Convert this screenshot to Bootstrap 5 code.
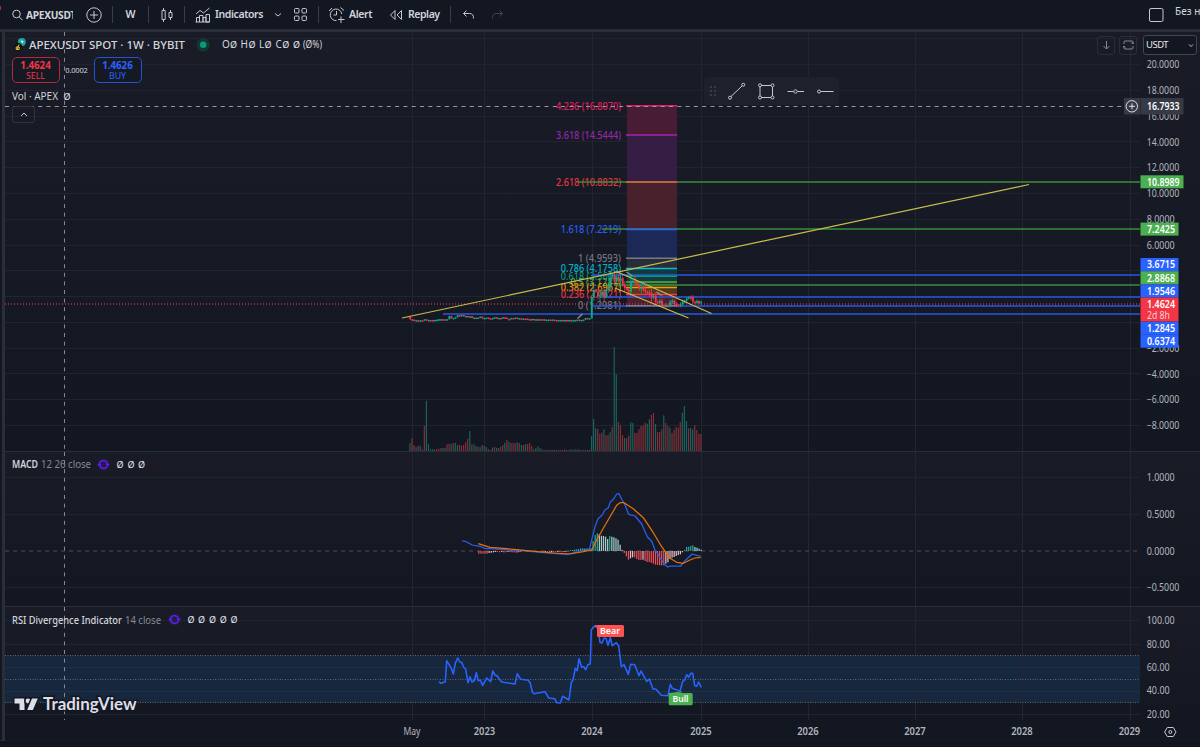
<!DOCTYPE html>
<html lang="en" data-bs-theme="dark">
<head>
  <meta charset="UTF-8" />
  <meta name="viewport" content="width=device-width, initial-scale=1" />
  <title>APEXUSDT</title>
  <link href="https://cdn.jsdelivr.net/npm/bootstrap@5.3.2/dist/css/bootstrap.min.css" rel="stylesheet" />
  <style>
    body { background: #131722; color: #d1d4dc; font-family: "Noto Sans", "Open Sans", sans-serif; font-size: 10.5px; line-height: 1; height: 747px; overflow: hidden; }
    svg { display: block; flex: none; }
    svg text { font-family: "Noto Sans", "Open Sans", sans-serif; font-size: 10px; }
    .topbar { height: 29px; background: #131722; font-weight: 600; font-size: 10.5px; }
    .topbar .slot { display: flex; align-items: center; flex: none; height: 29px; white-space: nowrap; }
    .topbar .sep { width: 1px; height: 17px; background: #3a3e4a; flex: none; }
    .topbar .ticker { width: 47px; font-weight: 700; font-size: 10.2px; letter-spacing: -.3px; margin-left: -1px; line-height: 14px; }
    .ico { fill: none; stroke: #c5c8d0; stroke-width: 1; }
    .workspace { border-top: 3px solid #2a2e39; height: 711px; }
    .strip { width: 5px; border-left: 2px solid #131722; background: #2a2e39; flex: none; }
    .pane { background: linear-gradient(#191c27, #131722); }
    .pane + .pane { border-top: 1px solid #2a2e39; }
    .legend { position: absolute; left: 7px; white-space: nowrap; }
    .quote { width: 48px; height: 26px; border: 1px solid; border-radius: 5px; font-size: 8.8px; text-align: center; padding-top: 2px; line-height: 11px; background: #151924; }
    .quote b { font-size: 9.8px; display: block; font-weight: 700; letter-spacing: -.05px; }
    .quote.sell { color: #f23645; border-color: #b22b3a; }
    .quote.buy { color: #2962ff; border-color: #2354d6; }
    .spread { width: 34px; font-size: 7.5px; letter-spacing: -.2px; padding-top: 2px; }
    .fold { width: 23px; height: 17px; border: 1px solid #2f333f; border-radius: 3px; }
    .tools { position: absolute; left: 699px; top: 45px; width: 135px; height: 28px; background: #1d212c; border-radius: 4px; }
    .sqbtn { width: 18px; height: 19px; border: 1px solid #2a2e39; border-radius: 3px; }
    .currency { width: 54px; height: 20px; border: 1px solid #434651; border-radius: 3px; background: #131722; color: #e4e6ec; font-size: 9.5px; letter-spacing: -.5px; }
    .corner { position: absolute; right: 3px; top: 3px; }
    .brand { position: absolute; left: 8px; top: 87px; }
    .timeaxis { height: 22px; background: #131722; }
    .bottomline { height: 7px; border-top: 1px solid #2a2e39; background: #11141e; }
    svg text.void { font-size: 9px; font-weight: 500; }
  </style>
</head>
<body>
  <header class="topbar d-flex align-items-center position-relative">
    <div class="slot ps-2" style="width:80px">
      <svg class="ico ms-1 me-1" width="11" height="12" viewBox="0 0 11 12"><circle cx="4.5" cy="5" r="3.8"/><path d="M7.2 7.8l3.3 3.4"/></svg>
      <span class="ticker overflow-hidden">APEXUSDT</span>
    </div>
    <div class="slot" style="width:32px">
      <svg class="ico" width="28" height="18" viewBox="80 6 28 18"><circle cx="94" cy="15" r="7.2"/><path d="M90 15h8M94 11v8"/></svg>
    </div>
    <div class="sep"></div>
    <div class="slot justify-content-center" style="width:35px">W</div>
    <div class="sep"></div>
    <div class="slot justify-content-center" style="width:35px">
      <svg class="ico" width="14" height="16" viewBox="0 0 14 16"><path d="M2 3.5h3.2v9H2zM3.5 1v2.5M3.5 12.5V15M9 5.5h3v5H9zM10.5 3v2.5M10.5 10.5V13"/></svg>
    </div>
    <div class="sep"></div>
    <div class="slot" style="width:133px">
      <svg class="ico" width="30" height="18" viewBox="185 6 30 18"><path d="M196.5 22v-4.5h3V22M199.5 22v-6.5h3.5V22M203 22v-4.5h3V22M206 22v-7.5h3.5V22zM195.5 22h14M196 14l4-3.5 3.5 2.5 6-5"/></svg>
      <span style="letter-spacing:-.4px;width:49px">Indicators</span>
      <svg class="ico" width="54" height="18" viewBox="264 6 54 18"><path d="M275 13.5l3 2.5 3-2.5"/><g><rect x="294.5" y="8.5" width="4.5" height="4.5" rx="1"/><rect x="302" y="8.5" width="4.5" height="4.5" rx="1"/><rect x="294.5" y="16" width="4.5" height="4.5" rx="1"/><rect x="302" y="16" width="4.5" height="4.5" rx="1"/></g></svg>
    </div>
    <div class="sep"></div>
    <div class="slot" style="width:131px">
      <svg class="ico" width="30" height="18" viewBox="319 6 30 18"><path d="M341.8 14a5.8 5.8 0 1 0-5.3 6.6M336.5 11v4h-3M329 11l3-3M340.5 7.5l3.5 3M341 16.5v6.5M338 19.5h6.5"/></svg>
      <span style="width:40px;letter-spacing:-.35px">Alert</span>
      <svg class="ico" width="19" height="18" viewBox="389 6 19 18"><path d="M395 10.5v9l-4.5-4.5zM401.5 10.5v9L397 15z"/></svg>
      <span style="letter-spacing:-.45px">Replay</span>
    </div>
    <div class="sep"></div>
    <div class="slot">
      <svg class="ico" width="56" height="18" viewBox="451 6 56 18"><path d="M466.5 10.5L463.5 13.5l3 3M463.5 13.5h6c3 0 4 2 4 5"/><path stroke="#434651" d="M499.5 10.5l3 3-3 3M502.5 13.5h-6c-3 0-4 2-4 5"/></svg>
    </div>
    <div class="slot ms-auto align-items-start" style="width:52px">
      <svg class="ico" width="27" height="24" viewBox="1148 0 27 24"><rect x="1149.5" y="8.5" width="13.5" height="13" rx="1.5"/></svg>
      <span class="fw-normal" style="font-size:10px;padding-top:6px">Без н</span>
    </div>
    <svg class="position-absolute start-0 top-0" width="3" height="14"><circle cx="-2" cy="8" r="3" fill="#c62f3d"/></svg>
  </header>

  <main class="workspace d-flex">
    <div class="strip"></div>
    <div class="d-flex flex-column">
      <section class="pane position-relative" style="height:419px">
        <svg id="price" width="1195" height="419" viewBox="5 32 1195 419"></svg>
        <div class="legend" style="top:6px">
          <svg width="320" height="15" viewBox="12 38 320 15" fill="#d1d4dc">
            <circle cx="21.8" cy="42" r="4" fill="#1aa6a0"/><path d="M20.5 40.5l3 .5-1 2.5z" fill="#fff"/><circle cx="18" cy="47" r="4.2" fill="#15130c"/><path d="M17 49.5l2-5M16.2 47h3v2.5h-3z" stroke="#e6c832" fill="none"/>
            <text x="29" y="49" textLength="156" lengthAdjust="spacingAndGlyphs" style="font-size:11.5px" font-weight="500">APEXUSDT SPOT · 1W · BYBIT</text>
            <circle cx="203.2" cy="44.8" r="6.7" fill="#17352f"/><circle cx="203.2" cy="44.8" r="3.2" fill="#089981"/>
            <text x="222" y="48.3">O</text><text class="void" x="230" y="48.3">Ø</text>
            <text x="240.5" y="48.3">H</text><text class="void" x="248.5" y="48.3">Ø</text>
            <text x="259" y="48.3">L</text><text class="void" x="264.5" y="48.3">Ø</text>
            <text x="275.5" y="48.3">C</text><text class="void" x="282.3" y="48.3">Ø</text>
            <text class="void" x="293" y="48.3">Ø</text>
            <text x="303" y="48.3" textLength="19" lengthAdjust="spacingAndGlyphs">(Ø%)</text>
          </svg>
        </div>
        <div class="legend d-flex align-items-center" style="top:25px;left:6.5px">
          <div class="quote sell"><b>1.4624</b>SELL</div>
          <span class="spread text-center">0.0002</span>
          <div class="quote buy"><b>1.4626</b>BUY</div>
        </div>
        <div class="legend" style="top:57px"><svg width="70" height="14" viewBox="12 89 70 14" fill="#d1d4dc"><text x="12" y="99.7" textLength="46" lengthAdjust="spacingAndGlyphs">Vol · APEX</text><text class="void" x="63.5" y="99.7">Ø</text></svg></div>
        <div class="legend fold d-flex justify-content-center align-items-center" style="top:74px"><svg class="ico" width="8" height="5" viewBox="0 0 8 5"><path d="M1 4l3-3 3 3"/></svg></div>
        <div class="tools"><svg class="ico" width="135" height="28" viewBox="704 77 135 28">
          <g fill="#5d606b" stroke="none"><circle cx="711" cy="87" r=".8"/><circle cx="715" cy="87" r=".8"/><circle cx="711" cy="91" r=".8"/><circle cx="715" cy="91" r=".8"/><circle cx="711" cy="95" r=".8"/><circle cx="715" cy="95" r=".8"/></g>
          <path d="M731 96.5L742 86M761 85.5h10M761 97.5h10M760 87v9M772.5 87v9M787.5 91.5h6M797.5 91.5h6.5M821 91.5h12.5"/>
          <circle cx="730" cy="97.7" r="1.5"/><circle cx="743.3" cy="84.7" r="1.5"/>
          <circle cx="760" cy="85.3" r="1.5"/><circle cx="772.5" cy="85.3" r="1.5"/><circle cx="760" cy="97.5" r="1.5"/><circle cx="772.5" cy="97.5" r="1.5"/>
          <circle cx="795.5" cy="91.5" r="1.7"/><circle cx="819" cy="91.5" r="1.5"/></svg></div>
        <div class="corner d-flex align-items-center">
          <div class="sqbtn d-flex justify-content-center align-items-center"><svg class="ico" style="stroke:#868993" width="9" height="9" viewBox="0 0 9 9"><path d="M4.5 0v8M1.5 5l3 3 3-3"/></svg></div>
          <div class="sqbtn d-flex justify-content-center align-items-center" style="margin:0 6px 0 4px"><svg class="ico" style="stroke:#868993" width="11" height="10" viewBox="0 0 11 10"><path d="M1 4V2q0-1 1-1h7q1 0 1 1v1.5M10 6v2q0 1-1 1H2q-1 0-1-1V6.5M8.5 2.5L10 4l1-1.5M0 7.5L1 6l1.5 1.5"/></svg></div>
          <div class="currency d-flex align-items-center justify-content-between"><span style="padding-left:2px">USDT</span><svg class="ico" width="9" height="5" viewBox="0 0 9 5"><path d="M2 1.5l2 2 2-2"/></svg></div>
        </div>
      </section>

      <section class="pane position-relative" style="height:155px">
        <svg id="macd" width="1195" height="154" viewBox="5 452 1195 154"></svg>
        <div class="legend" style="top:5px"><svg width="150" height="16" viewBox="12 457 150 16" fill="#d1d4dc">
          <text x="12" y="468.3" textLength="26" lengthAdjust="spacingAndGlyphs" font-weight="600">MACD</text>
          <text x="41" y="468.3" textLength="50" lengthAdjust="spacingAndGlyphs" fill="#868993">12 26 close</text>
          <use href="#sync" x="103.5" y="464.5"/>
          <text class="void" x="116.5" y="467.8">Ø</text><text class="void" x="127.5" y="467.8">Ø</text><text class="void" x="138" y="467.8">Ø</text></svg></div>
      </section>

      <section class="pane position-relative" style="height:114px">
        <svg id="rsi" width="1195" height="113" viewBox="5 607 1195 113"></svg>
        <div class="legend" style="top:5px"><svg width="240" height="16" viewBox="12 612 240 16" fill="#d1d4dc">
          <text x="12" y="623.7" textLength="110" lengthAdjust="spacingAndGlyphs" font-weight="500">RSI Divergence Indicator</text>
          <text x="125" y="623.7" textLength="36" lengthAdjust="spacingAndGlyphs" fill="#868993">14 close</text>
          <use href="#sync" x="174.5" y="619.5"/>
          <text class="void" x="187.5" y="623.2">Ø</text><text class="void" x="198" y="623.2">Ø</text><text class="void" x="209" y="623.2">Ø</text><text class="void" x="219.7" y="623.2">Ø</text><text class="void" x="230.5" y="623.2">Ø</text></svg></div>
        <div class="brand"><svg width="128" height="24" viewBox="13 694 128 24" fill="#dcdee6" stroke="#131722" stroke-width="3" paint-order="stroke">
          <path d="M14.5 698.5h10v11.5h-5v-6.5h-5z"/><circle cx="28" cy="701" r="2.4"/><path d="M32 698.5h5.8l-4.9 11.5h-5.7z"/>
          <text x="43" y="710.4" textLength="93.5" lengthAdjust="spacingAndGlyphs" style="font-family:Lato,'Open Sans',sans-serif;font-size:16.5px;font-weight:700">TradingView</text></svg></div>
      </section>

      <div class="timeaxis"><svg id="time" width="1195" height="22" viewBox="5 720 1195 22"></svg></div>
    </div>
  </main>
  <div class="bottomline"></div>

  <svg width="0" height="0" class="position-absolute">
    <defs><g id="sync" fill="none" stroke="#651fff" stroke-width="1.2"><circle r="6.3" fill="#651fff" fill-opacity=".14" stroke="none"/><path d="M-4 -1.2a4.2 4.2 0 0 1 7.8 0M4 1.2a4.2 4.2 0 0 1-7.8 0M-5.6 1l1.5-1.7 1.7 1.7M5.6-1L4.1 .7 2.4-1"/></g></defs>
  </svg>

  <script src="https://cdn.jsdelivr.net/npm/bootstrap@5.3.2/dist/js/bootstrap.bundle.min.js"></script>
  <script>
    const STEP = 2.064, AXIS = 1140;
    const years = [412.5, 484.5, 592.5, 701.5, 808.5, 915.5, 1022.5, 1130.5];

    const line = (x1, y1, x2, y2, c, extra = '') => `<line x1="${x1}" y1="${y1}" x2="${x2}" y2="${y2}" stroke="${c}" ${extra}/>`;
    const rect = (x, y, w, h, c, extra = '') => `<rect x="${x}" y="${y}" width="${w}" height="${h}" fill="${c}" ${extra}/>`;
    const text = (x, y, s, w, c = '#b2b5be', extra = '') => `<text x="${x}" y="${y}" fill="${c}" textLength="${w}" lengthAdjust="spacingAndGlyphs" ${extra}>${s}</text>`;
    // points are stored at three times the chart scale
    const poly = (pts, ox, oy, c, w) => `<polyline fill="none" stroke="${c}" stroke-width="${w}" stroke-linejoin="round" points="${pts.trim().split(/\s+/).map(p => { const [x, y] = p.split(','); return (ox + x / 3).toFixed(1) + ',' + (oy + y / 3).toFixed(1); }).join(' ')}"/>`;

    function grid(top, bottom, ys) {
      let s = '';
      years.forEach(x => s += line(x, top, x, bottom, '#222632'));
      ys.forEach(y => s += line(5, y, AXIS, y, '#20242f'));
      return s;
    }
    const cross = (top, bottom) => line(64.5, top, 64.5, bottom, '#858892', 'stroke-dasharray="4 4.6"');

    function drawPrice() {
      const Y = v => 322.4 - v * 12.895;
      const snap = y => Math.floor(y) + .5;
      const ticks = [];
      for (let v = 22; v >= -8; v -= 2) ticks.push(v);
      let s = grid(32, 451, ticks.map(v => snap(Y(v))));

      // volume
      const vol = '24g 38r 18r 12g 16r 16g 5r 75r 151g 20g 6g 5g 5r 6r 7r 9r 9g 9g 20r 22r 21g 24r 24g 18g 19r 16r 18r 26r 37r 60g 20r 20g 15g 13r 12g 18r 16g 12g 6r 3r 10g 12r 9g 9r 13r 18r 25g 33r 28g 24r 24r 24r 26g 24r 18g 18r 21g 21r 24r 15r 5r 9g 14g 9g 5r 3g 3r 3r 3g 3r 3r 3g 3r 3r 3g 5r 3r 3r 5g 3r 5g 4r 5g 3r 3g 3r 3g 4r 45g 96g 69g 66r 52r 55r 65g 48r 48r 57g 72r 312g 230g 87r 78r 48r 39g 39r 46r 86g 84g 54r 54r 65r 75r 77r 85r 82g 95g 108r 114r 81g 56r 57r 65r 107g 84r 75r 70g 54r 64r 72r 70r 87r 115g 135g 90g 68r 69g 65g 77r 63r 51r 51r'.split(' ');
      vol.forEach((v, i) => {
        const h = parseInt(v) / 3;
        s += rect((409.3 + i * STEP).toFixed(2), (451 - h).toFixed(1), 1.2, h.toFixed(1), v.endsWith('g') ? '#1a625d' : '#813138');
      });

      // extension zones
      const fib = [
        [105.8, '4.236 (16.8070)', '#e91e63', '#471c34'], [135, '3.618 (14.5444)', '#9c27b0', '#351d43'],
        [182, '2.618 (10.8832)', '#f23645', '#48212d'], [229.5, '1.618 (7.2219)', '#2962ff', '#1c2957'],
        [258.2, '1 (4.9593)', '#787b86', '#292d3a'], [268.4, '0.786 (4.1758)', '#00bcd4', '#14383f'],
        [276.3, '0.618 (3.5607)', '#089981', '#163c39'], [282, '0.5 (3.1287)', '#4caf50', '#24402b'],
        [287.5, '0.382 (2.6967)', '#ff9800', '#51391d'], [294.5, '0.236 (2.1621)', '#f23645', '#4c202e'],
        [305.7, '0 (1.2981)', '#787b86', '']
      ];
      fib.forEach(([y, , , fill], i) => { if (fill) s += rect(627, y, 50, fib[i + 1][0] - y, fill); });
      fib.forEach(([y, label, c]) => {
        const w = label.length * 4.8 - 7 + (label.length < 12 ? 2 : 0);
        s += text(621 - w, y + 3.7, label, w, c, 'opacity=".95" font-weight="500"');
      });

      // horizontal levels
      [[10.8989, 578, '#388e3c'], [7.2425, 602, '#388e3c'], [3.6715, 592, '#2657e0'], [2.8868, 615, '#388e3c'], [1.9546, 600, '#2657e0'], [1.2845, 592, '#2657e0'], [.6374, 443, '#2657e0']]
        .forEach(([v, x, c]) => s += line(x, Math.round(Y(v)), AXIS, Math.round(Y(v)), c, 'stroke-width="1.3"'));
      s += line(5, 304, AXIS, 304, '#c02f40', 'stroke-width="1.3" stroke-dasharray="1 2"');
      fib.forEach(([y, , c]) => s += line(626, y, 677, y, y === 182 ? '#e0653a' : c, 'stroke-width="1.5"'));

      // weekly candles
      const close = [328,329,331,331,331,331,331,328,330,330,330,331,330,329,328,328,328,329,328,318,325,324,322,316,317,315,318,318,320,319,324,323,326,323,320,325,324,323,325,326,324,322,324,324,325,322,323,327,327,324,324,323,325,325,326,326,326,328,328,327,329,328,329,328,328,330,329,329,330,329,330,331,330,330,331,330,331,330,331,331,330,329,331,330,329,324,327,325,262,240,245,260,256,245,262,240,225,200,195,215,200,212,205,225,235,240,245,215,212,218,225,235,232,240,245,248,250,262,258,275,278,272,285,288,286,288,275,272,282,285,287,282,275,272,266,262,262,275,278,273,280,276];
      close.forEach((c, i) => {
        const o = i ? close[i - 1] : 320;
        // quiet stretches alternate even when the close barely moves
        const up = c < o || (c === o && i % 2);
        const col = up ? '#0aa88e' : '#f23645';
        const top = 210 + Math.min(o, c) / 3, h = Math.max(1.3, Math.abs(c - o) / 3);
        const wick = i > 88 ? 1 + (i * 7 % 5) * (i < 120 ? .9 : .3) : .2;
        const x = 409.3 + i * STEP;
        s += rect((x + .4).toFixed(2), (top - wick).toFixed(1), .8, (h + wick * 2).toFixed(1), col);
        s += rect((x - .1).toFixed(2), top.toFixed(1), 1.9, h.toFixed(1), col);
      });

      // trend lines
      const ty = '#c9bd4c';
      s += line(402, 318, 1029, 184.5, ty, 'stroke-width="1.2"') + line(616.5, 271.5, 711.5, 313.5, ty, 'stroke-width="1.2"') + line(615, 288, 688.5, 318, ty, 'stroke-width="1.2"');
      s += line(577.5, 318.5, 582.5, 314, '#8b8e98', 'stroke-width="1.3"') + line(626.5, 272, 662, 295.5, '#8b8e98', 'stroke-width="1.3" stroke-dasharray="7 11"');

      // crosshair
      s += cross(32, 451) + line(5, 106.5, 1125, 106.5, '#9598a1', 'stroke-dasharray="4 4.3"');

      // price scale
      for (let v = 20; v >= -8; v -= 2) {
        if (v >= 0 && v < 6) continue;
        const str = (v < 0 ? '−' : '') + Math.abs(v).toFixed(4);
        s += text(1146.7, Y(v) + 3.7, str, str.length > 6 ? 32.5 : 28);
      }
      const tag = (y, h, str, c) => rect(1140.5, y, str.length > 6 ? 43 : 38, h, c) + text(1147, y + h / 2 + 3.7, str, str.length > 6 ? 32.5 : 28, '#fff', 'font-weight="600"');
      s += rect(1124, 98, 16, 16.5, '#363a45') + tag(98, 16.5, '16.7933', '#363a45');
      s += '<g class="ico" style="stroke:#e0e3eb"><circle cx="1131.8" cy="106.3" r="5.7"/><path d="M1129 106.3h6M1132 103.3v6"/></g>';
      s += tag(175.3, 13, '10.8989', '#4caf50') + tag(222.6, 13, '7.2425', '#4caf50');
      s += tag(258, 13.5, '3.6715', '#2962ff') + tag(271.3, 13.2, '2.8868', '#4caf50') + tag(284.5, 13, '1.9546', '#2962ff');
      s += tag(321.5, 13, '1.2845', '#2962ff') + tag(334.3, 13.4, '0.6374', '#2962ff');
      s += rect(1140.5, 297.5, 38, 24, '#f23645') + text(1147, 307.7, '1.4624', 28, '#fff', 'font-weight="600"') + text(1147, 318.8, '2d 8h', 23, '#fbd0d4');
      document.getElementById('price').innerHTML = s;
    }

    function drawMacd() {
      let s = grid(452, 606, [477.5, 514.5, 587.5]);
      s += line(5, 551, AXIS, 551, '#4a4e59', 'stroke-dasharray="4 4"');
      const hist = [-8,-8,-8,-8,-8,-6,-5,-4,-3,-3,-4,-3,-4,-4,-3,-3,-4,-4,-5,-4,-2,2,2,-2,-2,-3,-3,-3,-3,-4,-4,-4,-3,-3,-5,-4,-4,-4,-3,-3,-4,-3,-2,-2,3,3,4,5,6,8,8,7,8,7,8,30,48,53,51,46,45,43,36,45,43,41,38,34,19,3,-6,-16,-26,-22,-19,-19,-24,-27,-27,-26,-30,-33,-33,-35,-38,-41,-42,-43,-43,-43,-38,-34,-24,-20,-18,-15,-12,-10,-4,3,12,13,15,17,12,10,7,4];
      hist.forEach((v, i) => {
        const p = hist[i - 1] || 0, h = Math.abs(v) / 3;
        const c = v > 0 ? (v >= p ? '#26a69a' : '#a4cdca') : (v <= p ? '#ea4e53' : '#e6bcc1');
        s += rect((478.2 + i * 2.078).toFixed(2), (v > 0 ? 551 - h : 551).toFixed(1), 1.25, h.toFixed(1), c);
      });
      s += poly('66,183 76,184 97,195 120,199 133,205 190,208 215,212 255,213 320,219 380,223 410,216 430,210 448,209 455,180 465,140 474,116 486,106 495,90 505,83 511,66 520,58 530,42 537,41 545,58 555,75 566,103 585,108 605,132 622,170 635,184 645,210 660,232 672,252 683,261 690,258 722,258 735,242 757,222 770,226 782,228', 440, 480, '#2a5fee', 1.25);
      s += poly('115,191 150,202 200,206 260,212 340,219 390,222 430,215 455,210 470,180 490,145 510,110 530,76 540,68 552,68 580,86 610,113 640,158 665,200 690,235 710,247 730,250 750,240 765,234 782,232', 440, 480, '#e8700c', 1.25);
      s += cross(452, 606);
      [[477.5, '1.0000'], [514.3, '0.5000'], [550.8, '0.0000'], [587.7, '−0.5000']].forEach(([y, t]) => s += text(1146.7, y + 3.7, t, t.length > 6 ? 32.5 : 28));
      document.getElementById('macd').innerHTML = s;
    }

    function drawRsi() {
      let s = rect(5, 655.5, 1135, 47, '#17273d') + grid(607, 720, [620.5, 644.5, 714.5]);
      s += line(5, 667.5, AXIS, 667.5, '#1f3147') + line(5, 691.5, AXIS, 691.5, '#1f3147');
      [655.5, 679.5, 702.5].forEach(y => s += line(5, y, AXIS, y, '#5d6675', 'stroke-dasharray="1 1.5"'));
      s += poly('57,215 63,220 76,215 80,152 88,165 94,175 100,192 106,160 113,144 119,156 125,157 131,172 137,178 144,218 150,200 156,216 163,212 169,188 175,212 181,210 188,226 200,204 212,215 218,183 225,195 231,197 245,216 285,222 292,191 302,208 325,211 331,220 337,246 342,251 375,245 386,264 404,266 410,278 421,279 428,259 447,270 454,217 459,210 466,175 472,182 477,146 485,172 491,170 497,179 503,165 511,161 514,60 520,52 528,47 535,60 540,97 546,99 552,85 558,85 564,106 571,83 577,107 589,98 596,108 604,170 612,164 625,193 632,163 644,164 657,197 663,183 680,214 688,207 699,237 707,237 724,256 744,257 751,223 757,235 780,244 788,214 794,210 800,194 806,202 812,190 818,190 824,227 830,229 836,216 844,232', 420, 610, '#2962ff', 1.6);
      s += line(594.5, 626, 600, 626, '#ff5252', 'stroke-width="1.5"') + line(669, 693.5, 682, 692, '#4caf50');
      s += rect(597, 625, 27, 12, '#ff5252', 'rx="1.5"') + text(600, 634.2, 'Bear', 20, '#fff', 'font-weight="600" style="font-size:9.5px"');
      s += rect(668.7, 693, 24, 12.3, '#4caf50', 'rx="1.5"') + text(672.5, 702.2, 'Bull', 16, '#fff', 'font-weight="600" style="font-size:9.5px"');
      s += cross(607, 720);
      [[620.5, '100.00'], [644, '80.00'], [667.5, '60.00'], [690.7, '40.00'], [714.3, '20.00']].forEach(([y, t]) => s += text(1146.7, y + 3.7, t, t.length > 5 ? 28 : 23));
      document.getElementById('rsi').innerHTML = s;
    }

    function drawTime() {
      let s = '';
      [[412, 'May'], [484.5, '2023'], [592, '2024'], [701, '2025'], [808, '2026'], [915, '2027'], [1022, '2028'], [1129.5, '2029']].forEach(([x, t]) => {
        const w = t === 'May' ? 17 : 21.5;
        s += text(x - w / 2, 734.7, t, w, '#b2b5be', t === 'May' ? '' : 'font-weight="600"');
      });
      s += '<g class="ico"><path d="M1167.3 727.5h6l2.7 4.5-2.7 4.5h-6l-2.7-4.5z"/><circle cx="1170.3" cy="732" r="1.5"/></g>';
      document.getElementById('time').innerHTML = s;
    }

    drawPrice();
    drawMacd();
    drawRsi();
    drawTime();
  </script>
</body>
</html>
